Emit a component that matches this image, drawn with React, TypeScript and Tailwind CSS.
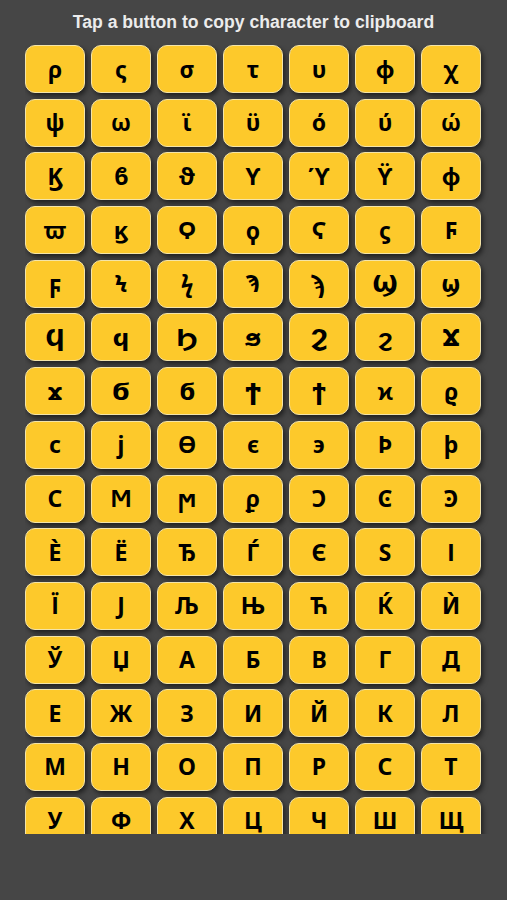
import React from 'react'

// sequential run of code points starting at GREEK SMALL LETTER RHO
const START = 0x3c1
const COUNT = 7 * 15
const chars = Array.from({ length: COUNT }, (_, i) => String.fromCodePoint(START + i))

const CharButton: React.FC<{ ch: string }> = ({ ch }) => (
  <button
    className="w-[60px] h-[48px] rounded-[10px] border-[1.5px] border-[#f4e4a8] bg-[#fdc92b] shadow-[2px_3px_5px_rgba(0,0,0,0.55)] flex items-center justify-center text-[23px] font-bold text-black leading-none"
    style={{ fontFamily: '"Noto Sans", "DejaVu Sans", sans-serif' }}
    onClick={() => navigator.clipboard?.writeText(ch)}
  >
    {ch}
  </button>
)

const App: React.FC = () => {
  return (
    <div className="w-full h-[900px] bg-[#464646] flex flex-col">
      <div
        className="pt-[12px] h-[45px] text-center text-[17.6px] leading-[20px] font-bold text-[#ececec]"
        style={{ fontFamily: '"Liberation Sans", Arial, sans-serif' }}
      >
        Tap a button to copy character to clipboard
      </div>
      <div className="ml-[25px] w-[464px] h-[789px] overflow-hidden">
        <div className="grid grid-cols-[repeat(7,60px)] gap-x-[6px] gap-y-[5.7px]">
          {chars.map(c => (
            <CharButton key={c} ch={c} />
          ))}
        </div>
      </div>
    </div>
  )
}

export default App
